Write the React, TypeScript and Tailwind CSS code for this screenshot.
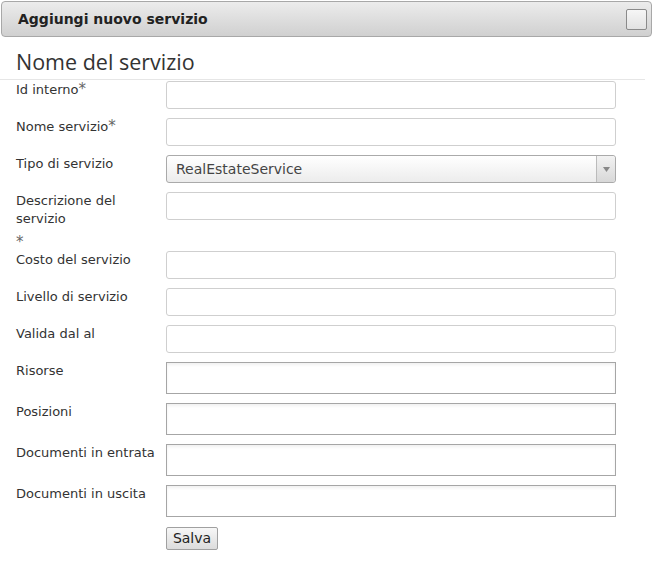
import React from "react";

type Field = {
  label: React.ReactNode;
  kind?: "text" | "select" | "tall";
};

const Star = () => <span className="text-[15px] leading-[0] text-[#666]">*</span>;

const fields: Field[] = [
  { label: <>Id interno<Star /></> },
  { label: <>Nome servizio<Star /></> },
  { label: "Tipo di servizio", kind: "select" },
  {
    label: (
      <>
        Descrizione del servizio
        <div className="h-[18px] pt-[5px] text-[15px] leading-[18px] text-[#666]">*</div>
      </>
    ),
  },
  { label: "Costo del servizio" },
  { label: "Livello di servizio" },
  { label: "Valida dal al" },
  { label: "Risorse", kind: "tall" },
  { label: "Posizioni", kind: "tall" },
  { label: "Documenti in entrata", kind: "tall" },
  { label: "Documenti in uscita", kind: "tall" },
];

function SelectBox() {
  return (
    <div className="flex h-[28px] w-[450px] items-stretch rounded-[3px] border border-[#aaa] bg-gradient-to-b from-white to-[#ececec]">
      <div className="flex flex-1 items-center pl-[9px] text-[14px] text-[#444]">RealEstateService</div>
      <div className="flex w-[19px] items-center justify-center rounded-r-[3px] border-l border-[#bbb] bg-gradient-to-b from-[#f2f2f2] to-[#d8d8d8]">
        <svg width="7" height="5" viewBox="0 0 7 5">
          <path d="M0 0h7L3.5 5z" fill="#888" />
        </svg>
      </div>
    </div>
  );
}

export default function App() {
  return (
    <div className="min-h-[580px] w-[653px] bg-white pt-px text-[#333]" style={{ fontFamily: '"DejaVu Sans", Verdana, sans-serif' }}>
      <div className="mx-px flex h-[36px] items-center justify-between rounded-[4px] border border-[#a8a8a8] bg-gradient-to-b from-[#ececec] to-[#d0d0d0] pl-[16px] pr-[4px]">
        <span className="text-[14px] font-bold text-[#222]">Aggiungi nuovo servizio</span>
        <div className="h-[21px] w-[21px] rounded-[2px] border border-[#8a8a8a] bg-gradient-to-b from-[#f6f6f6] to-[#e2e2e2]" />
      </div>

      <div className="mr-[8px]">
        <h2
          className="border-b border-[#e6e6e6] pb-[4px] pl-[16px] pt-[11px] text-[21.5px] leading-[27px] text-[#333]"
          style={{ fontFamily: '"Open Sans", "Noto Sans", sans-serif' }}
        >
          Nome del servizio
        </h2>
      </div>

      <div className="pl-[16px] pt-px">
        {fields.map((f, i) => (
          <div key={i} className="flex items-start">
            <div className="w-[150px] pb-[5px] text-[13px] leading-[18px] text-[#333]">{f.label}</div>
            <div className="pb-[9px]">
              {f.kind === "select" ? (
                <SelectBox />
              ) : f.kind === "tall" ? (
                <div className="h-[32px] w-[450px] border border-[#a6a6a6] bg-white shadow-[inset_0_2px_3px_rgba(0,0,0,0.06)]" />
              ) : (
                <div className="h-[28px] w-[450px] rounded-[3px] border border-[#cfcfcf] bg-white" />
              )}
            </div>
          </div>
        ))}
        <div className="pl-[150px]">
          <button className="h-[23px] w-[52px] rounded-[2px] border border-[#a0a0a0] bg-gradient-to-b from-[#f7f7f7] to-[#dcdcdc] text-[14px] leading-[20px] text-[#222]">
            Salva
          </button>
        </div>
      </div>
    </div>
  );
}
